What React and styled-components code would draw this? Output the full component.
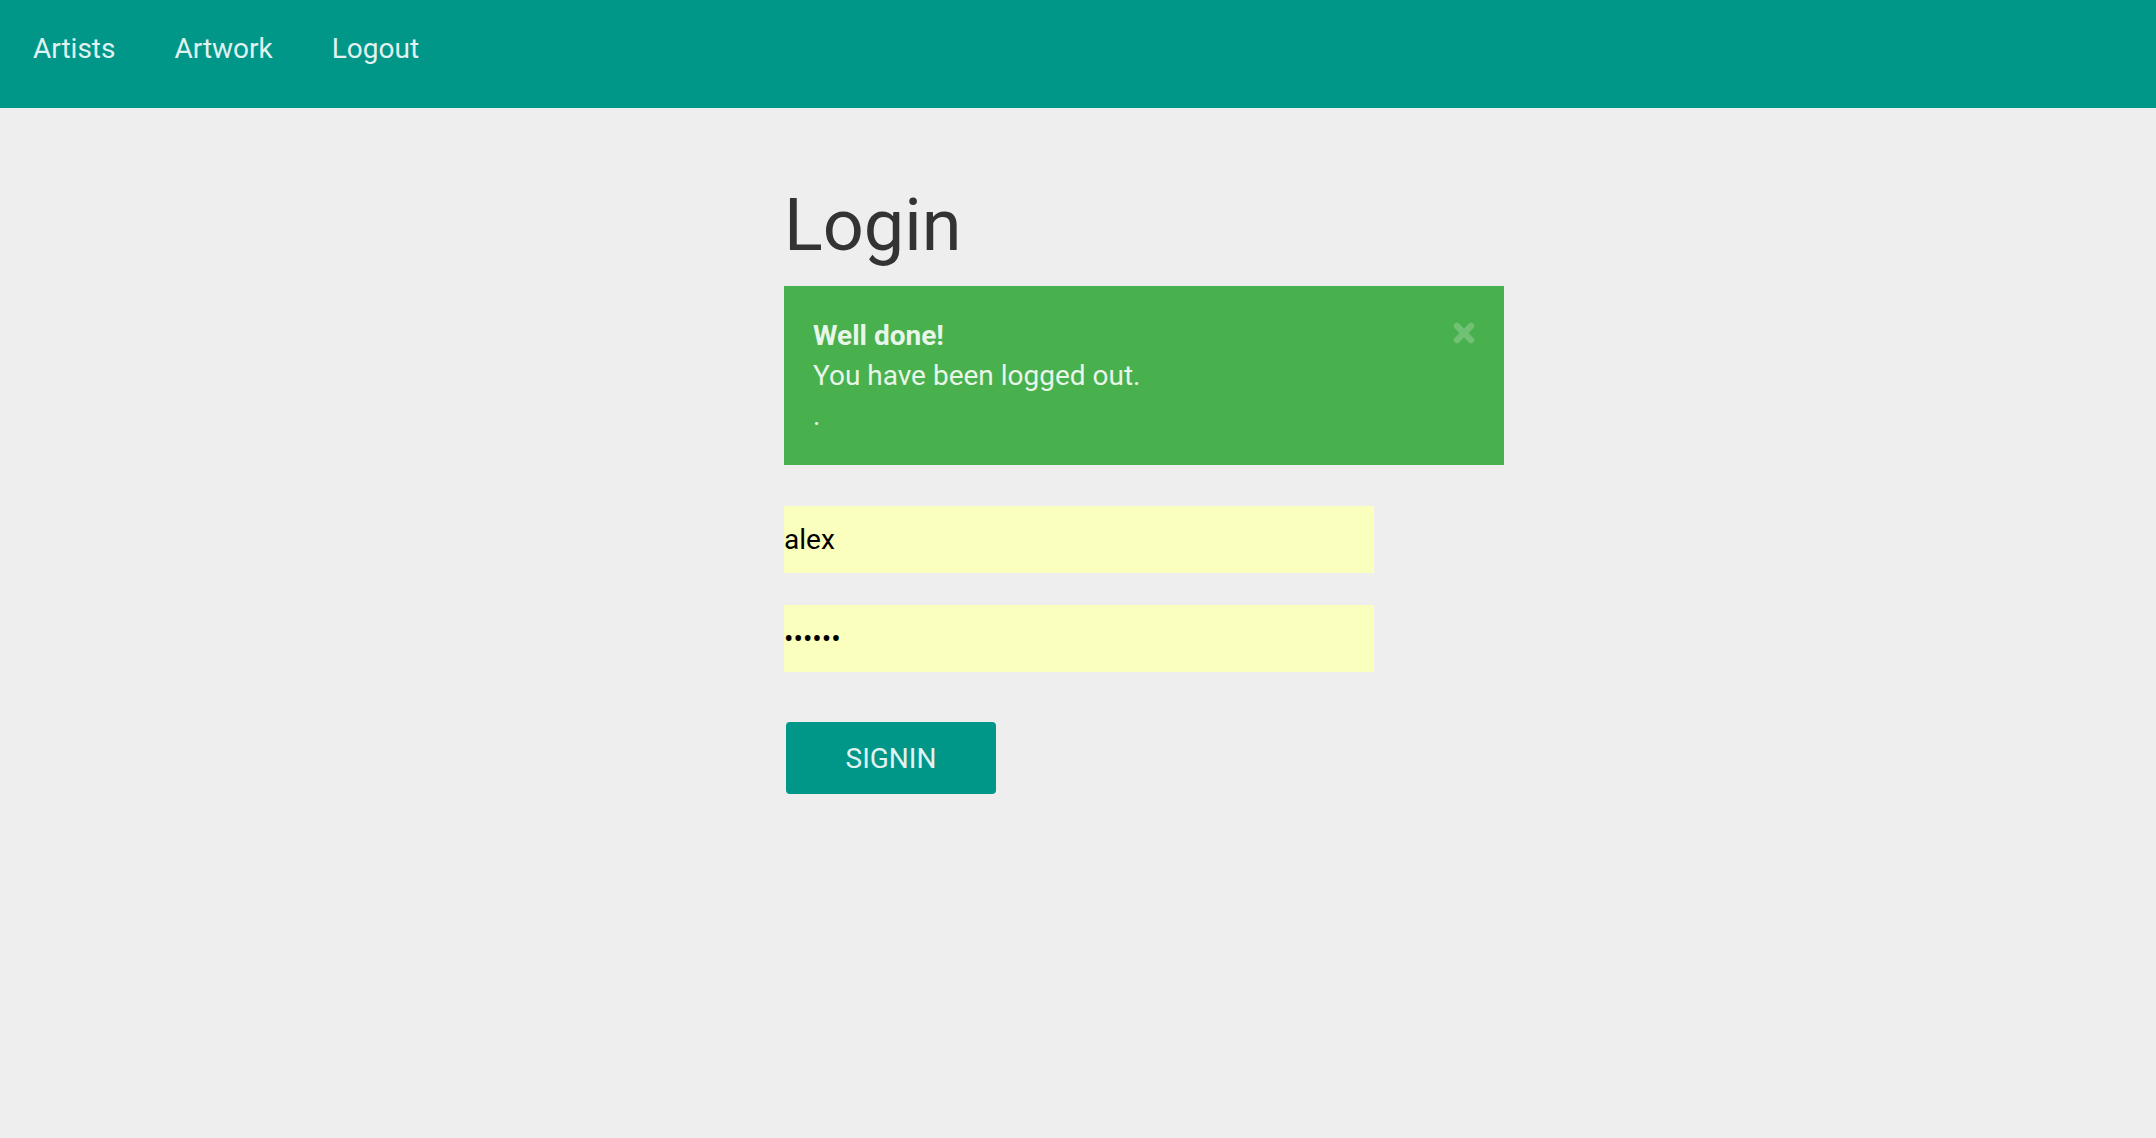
import React, { useState } from 'react'
import styled, { createGlobalStyle } from 'styled-components'

const GlobalStyle = createGlobalStyle`
  html, body {
    margin: 0;
    padding: 0;
    background-color: #eeeeee;
    font-family: Roboto, "Noto Sans", sans-serif;
  }
  * {
    box-sizing: border-box;
  }
`;

const App = () => {
  const [username, setUsername] = useState("alex");
  const [password, setPassword] = useState("secret");
  const [showAlert, setShowAlert] = useState(true);

  return (
    <Page>
      <GlobalStyle />
      <Nav>
        <NavList>
          <li><NavLink href="#">Artists</NavLink></li>
          <li><NavLink href="#">Artwork</NavLink></li>
          <li><NavLink href="#">Logout</NavLink></li>
        </NavList>
      </Nav>
      <Main>
        <Form onSubmit={(e) => e.preventDefault()}>
          <Title>Login</Title>
          {showAlert && (
            <Alert>
              <Close type="button" onClick={() => setShowAlert(false)} aria-label="close">
                <svg width="22" height="22" viewBox="0 0 22 22">
                  <path
                    d="M4 4 L18 18 M18 4 L4 18"
                    stroke="currentColor"
                    strokeWidth="6.5"
                    strokeLinecap="round"
                    fill="none"
                  />
                </svg>
              </Close>
              <strong>Well done!</strong>
              <br />
              You have been logged out.
              <br />
              .
            </Alert>
          )}
          <Input
            type="text"
            value={username}
            onChange={(e) => setUsername(e.target.value)}
          />
          <Input
            type="password"
            value={password}
            onChange={(e) => setPassword(e.target.value)}
          />
          <Button type="submit">Signin</Button>
        </Form>
      </Main>
    </Page>
  );
}

export default App

const Page = styled.div`
  min-height: 100vh;
  background-color: #eeeeee;
`;

const Nav = styled.nav`
  height: 108px;
  background-color: #009688;
  display: flex;
  align-items: flex-start;
`;

const NavList = styled.ul`
  list-style: none;
  margin: 0;
  padding: 0 0 0 33px;
  display: flex;
  gap: 59px;
`;

const NavLink = styled.a`
  display: block;
  line-height: 98px;
  font-size: 28px;
  color: #e0f2f1;
  text-decoration: none;
`;

const Main = styled.main`
  padding: 77px 0 0 784px;
`;

const Form = styled.form`
  width: 720px;
  display: flex;
  flex-direction: column;
  align-items: flex-start;
`;

const Title = styled.h1`
  margin: 0;
  font-size: 72px;
  line-height: 82px;
  font-weight: 400;
  color: #333333;
`;

const Alert = styled.div`
  position: relative;
  width: 720px;
  margin-top: 19px;
  padding: 30px 29px 29px 29px;
  background-color: #48b04c;
  color: #e8f5e9;
  font-size: 28px;
  line-height: 40px;

  strong {
    font-weight: 700;
  }
`;

const Close = styled.button`
  position: absolute;
  top: 36px;
  right: 29px;
  padding: 0;
  border: 0;
  background: none;
  color: rgba(255, 255, 255, 0.22);
  cursor: pointer;
  display: flex;
`;

const Input = styled.input`
  width: 590px;
  height: 67px;
  margin: 41px 0 0 0;
  padding: 0;
  border: 0;
  outline: none;
  background-color: #faffbd;
  color: #000000;
  font-family: Roboto, sans-serif;
  font-size: 28px;

  & + & {
    margin-top: 32px;
  }
`;

const Button = styled.button`
  margin: 50px 0 0 2px;
  width: 210px;
  height: 72px;
  border: 0;
  border-radius: 4px;
  background-color: #009688;
  color: #e0f2f1;
  font-family: Roboto, sans-serif;
  font-size: 28px;
  text-transform: uppercase;
  cursor: pointer;
`;
